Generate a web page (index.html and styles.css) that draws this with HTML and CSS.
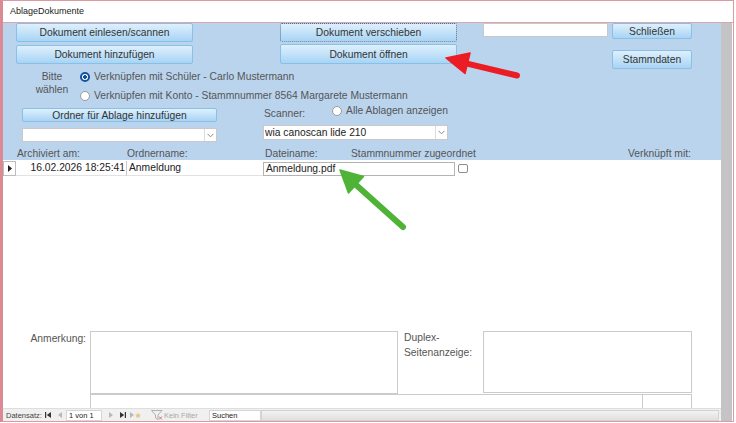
FILE: index.html
```html
<!DOCTYPE html>
<html lang="de">
<head>
<meta charset="utf-8">
<title>AblageDokumente</title>
<link rel="stylesheet" href="styles.css">
</head>
<body>
<div class="win">
  <div class="title">AblageDokumente</div>
  <div class="main">
    <div class="form">
      <div class="hdr">
        <div class="row-a">
          <div class="col c1">
            <div class="btn h19">Dokument einlesen/scannen</div>
            <div class="btn h19">Dokument hinzufügen</div>
          </div>
          <div class="col c2">
            <div class="btn h19 focus">Dokument verschieben</div>
            <div class="btn h20">Dokument öffnen</div>
          </div>
          <div class="tb search"></div>
          <div class="col c4">
            <div class="btn h16">Schließen</div>
            <div class="btn h19">Stammdaten</div>
          </div>
        </div>
        <div class="row-b">
          <div class="choose">Bitte<br>wählen</div>
          <div class="opts">
            <div class="opt"><span class="radio on"></span>Verknüpfen mit Schüler - Carlo Mustermann</div>
            <div class="opt"><span class="radio"></span>Verknüpfen mit Konto - Stammnummer 8564 Margarete Mustermann</div>
          </div>
        </div>
        <div class="row-c">
          <div class="folder">
            <div class="btn h14">Ordner für Ablage hinzufügen</div>
            <div class="combo c-folder"><span class="val"></span><span class="dd"><svg width="7" height="5" viewBox="0 0 7 5"><path d="M0.5 0.8 L3.5 3.8 L6.5 0.8" fill="none" stroke="#8a8a8a" stroke-width="1"/></svg></span></div>
          </div>
          <div class="scan">
            <div class="scan-top">
              <span class="lbl-scan">Scanner:</span>
              <span class="opt opt-all"><span class="radio"></span>Alle Ablagen anzeigen</span>
            </div>
            <div class="combo c-scan"><span class="val">wia canoscan lide 210</span><span class="dd"><svg width="7" height="5" viewBox="0 0 7 5"><path d="M0.5 0.8 L3.5 3.8 L6.5 0.8" fill="none" stroke="#8a8a8a" stroke-width="1"/></svg></span></div>
          </div>
        </div>
        <div class="row-d">
          <span class="h-arch">Archiviert am:</span>
          <span class="h-ord">Ordnername:</span>
          <span class="h-dat">Dateiname:</span>
          <span class="h-stn">Stammnummer zugeordnet</span>
          <span class="h-ver">Verknüpft mit:</span>
        </div>
      </div>
      <div class="detail">
        <div class="rec">
          <div class="sel"><svg width="4" height="7" viewBox="0 0 4 7"><path d="M0 0 L4 3.5 L0 7 Z" fill="#222"/></svg></div>
          <div class="cell date">16.02.2026 18:25:41</div>
          <div class="cell ordner">Anmeldung</div>
          <div class="cell datei">Anmeldung.pdf</div>
          <div class="chk"></div>
        </div>
        <div class="notes">
          <div class="lbl-anm">Anmerkung:</div>
          <div class="box anm"></div>
          <div class="lbl-dup">Duplex-<br>Seitenanzeige:</div>
          <div class="box dup"></div>
        </div>
        <div class="sub"><div class="sub-r"></div></div>
      </div>
      <div class="nav">
        <span class="nav-lbl">Datensatz:</span>
        <svg class="ic ic-first" width="6" height="6" viewBox="0 0 6 6"><rect x="0" y="0" width="1.2" height="6" fill="#333"/><path d="M6 0 L1.8 3 L6 6 Z" fill="#333"/></svg>
        <svg class="ic ic-prev" width="4" height="6" viewBox="0 0 4 6"><path d="M4 0 L0 3 L4 6 Z" fill="#b8b8b8"/></svg>
        <span class="navbox pos">1 von 1</span>
        <svg class="ic ic-next" width="4" height="6" viewBox="0 0 4 6"><path d="M0 0 L4 3 L0 6 Z" fill="#b8b8b8"/></svg>
        <svg class="ic ic-last" width="6" height="6" viewBox="0 0 6 6"><path d="M0 0 L4.2 3 L0 6 Z" fill="#333"/><rect x="4.8" y="0" width="1.2" height="6" fill="#333"/></svg>
        <svg class="ic ic-new" width="14" height="6" viewBox="0 0 14 6"><path d="M0 0 L4 3 L0 6 Z" fill="#b8b8b8"/><path d="M8 0.5 L9 2.5 L11 2.7 L9.5 4 L10 6 L8 5 L6 6 L6.5 4 L5 2.7 L7 2.5 Z" fill="#e8c48a"/></svg>
        <svg class="ic ic-filter" width="12" height="10" viewBox="0 0 12 10"><path d="M0.5 0.5 H11 L7 5 V9.5 L4.5 8 V5 Z" fill="none" stroke="#b0b0b0" stroke-width="1"/><path d="M8 6.5 L11 9.5 M11 6.5 L8 9.5" stroke="#c07070" stroke-width="0.9"/></svg>
        <span class="nav-filter">Kein Filter</span>
        <span class="navbox find">Suchen</span>
        <span class="hscroll"></span>
      </div>
    </div>
    <div class="vscroll"></div>
  </div>
  <svg class="arrows" width="736" height="423" viewBox="0 0 736 423">
    <line x1="464" y1="62.8" x2="517" y2="75.5" stroke="#ec1c24" stroke-width="6" stroke-linecap="round"/>
    <path d="M446 58 L465 73.5 L470 53 Z" fill="#ec1c24" stroke="#ec1c24" stroke-width="1.5" stroke-linejoin="round"/>
    <line x1="355" y1="184" x2="403" y2="227" stroke="#4fb338" stroke-width="6" stroke-linecap="round"/>
    <path d="M340 170 L348.5 193 L363.5 176.5 Z" fill="#4fb338" stroke="#4fb338" stroke-width="1.5" stroke-linejoin="round"/>
  </svg>
</div>
</body>
</html>
```

FILE: styles.css
```css
* { box-sizing: border-box; }

body {
  margin: 0;
  background: #fff;
  font-family: "Liberation Sans", Arial, sans-serif;
}

.win {
  position: relative;
  width: 734px;
  height: 422px;
  background: #fff;
  border-top: 1px solid #dc9aa2;
  border-left: 3px solid #d98a94;
  border-right: 1px solid #dc9aa2;
  border-bottom: 1px solid #dc9aa2;
}

.title {
  height: 22px;
  border-bottom: 1px solid #e0a4ab;
  padding-left: 7px;
  line-height: 21px;
  font-size: 9px;
  color: #222;
}

.main {
  display: flex;
  height: 398px;
}

.form {
  width: 718px;
  display: flex;
  flex-direction: column;
}

.vscroll {
  width: 11px;
  margin-left: 0;
  background: #c4c4c7;
}

/* ---------- header ---------- */
.hdr {
  height: 137px;
  background: #bad4ee;
  font-size: 10.3px;
  color: #555;
}

.row-a {
  display: flex;
  align-items: flex-start;
  height: 47px;
}

.col {
  display: flex;
  flex-direction: column;
}

.c1 { margin-left: 13px; width: 177px; gap: 3px; }
.c2 { margin-left: 87px; width: 177px; gap: 2px; }
.c4 { margin-left: 4px; width: 80px; gap: 11px; }

.btn {
  display: flex;
  align-items: center;
  justify-content: center;
  border: 1px solid #88c0e8;
  border-radius: 2px;
  background: linear-gradient(#def0fd, #a8d4f4);
  color: #333;
  font-size: 10.3px;
  white-space: nowrap;
}

.btn.focus { border: 1px dotted #4b6f93; }

.h14 { height: 14px; }
.h16 { height: 16px; }
.h19 { height: 19px; }
.h20 { height: 20px; }

.tb {
  background: #fff;
  border: 1px solid #c9c9c9;
}

.search {
  margin-left: 26px;
  width: 125px;
  height: 14px;
}

.row-b {
  display: flex;
  height: 32px;
}

.choose {
  margin-left: 29px;
  width: 40px;
  text-align: center;
  line-height: 13px;
}

.opts {
  margin-left: 8px;
  display: flex;
  flex-direction: column;
  gap: 6px;
}

.opt {
  display: flex;
  align-items: center;
  height: 13px;
  white-space: nowrap;
}

.radio {
  width: 10px;
  height: 10px;
  border-radius: 50%;
  border: 1px solid #9a9a9a;
  background: #fff;
  margin-right: 4px;
  flex: none;
}

.radio.on {
  border: 2px solid #13529f;
  background: radial-gradient(circle, #13529f 0 1.6px, #fff 2.1px);
}

.row-c {
  display: flex;
  height: 41px;
}

.folder {
  margin-left: 19px;
  width: 195px;
  padding-top: 6px;
  display: flex;
  flex-direction: column;
  gap: 6px;
}

.combo {
  display: flex;
  background: #fff;
  border: 1px solid #c9c9c9;
  color: #222;
}

.combo .val {
  flex: 1;
  padding-left: 1px;
  line-height: 13px;
}

.combo .dd {
  width: 12px;
  border-left: 1px solid #dcdcdc;
  display: flex;
  align-items: center;
  justify-content: center;
}

.c-folder { height: 14px; }

.scan {
  margin-left: 46px;
  width: 185px;
}

.scan-top {
  display: flex;
  align-items: flex-start;
  height: 23px;
}

.lbl-scan {
  width: 86px;
  padding-left: 1px;
  margin-top: 5px;
  line-height: 13px;
}

.opt-all {
  margin-top: 2px;
}

.c-scan { height: 15px; }

.row-d {
  display: flex;
  height: 17px;
  padding-top: 4px;
  line-height: 13px;
  white-space: nowrap;
}

.h-arch { margin-left: 14px; width: 110px; }
.h-ord { width: 138px; }
.h-dat { width: 86px; }
.h-stn { width: 277px; }
.h-ver { width: 66px; }

/* ---------- detail ---------- */
.detail {
  height: 248px;
  font-size: 10.3px;
  color: #222;
}

.rec {
  display: flex;
  align-items: flex-start;
  margin-top: 1px;
  height: 15px;
}

.sel {
  width: 13px;
  height: 15px;
  border: 1px solid #bdbdbd;
  display: flex;
  align-items: center;
  justify-content: center;
  background: #fff;
}

.cell {
  height: 15px;
  line-height: 14px;
  white-space: nowrap;
}

.date {
  width: 110px;
  text-align: right;
  padding-right: 1px;
  border-bottom: 1px solid #e2e2e2;
}

.ordner {
  width: 137px;
  padding-left: 2px;
  border-left: 1px solid #c8c8c8;
  border-bottom: 1px solid #e2e2e2;
}

.datei {
  width: 192px;
  margin-top: 1px;
  height: 14px;
  line-height: 12px;
  padding-left: 2px;
  border: 1px solid #b4b4b4;
}

.chk {
  margin-left: 3px;
  margin-top: 3px;
  width: 10px;
  height: 9px;
  border: 1px solid #8c8c8c;
  border-radius: 2px;
  background: #fff;
}

.notes {
  display: flex;
  margin-top: 155px;
  height: 63px;
  color: #555;
}

.lbl-anm {
  width: 83px;
  text-align: right;
  padding-top: 1px;
  line-height: 13px;
}

.box {
  border: 1px solid #cbcbcb;
  background: #fff;
}

.anm {
  margin-left: 4px;
  width: 308px;
  height: 63px;
}

.lbl-dup {
  margin-left: 6px;
  width: 79px;
  margin-top: -1px;
  line-height: 15px;
}

.dup {
  width: 209px;
  height: 62px;
}

.sub {
  margin-left: 87px;
  width: 602px;
  height: 14px;
  border: 1px solid #cbcbcb;
  border-bottom: none;
  display: flex;
}

.sub-r {
  margin-left: 551px;
  width: 49px;
  border-left: 1px solid #cbcbcb;
}

/* ---------- navigation bar ---------- */
.nav {
  display: flex;
  align-items: center;
  height: 13px;
  background: #f0f0f0;
  border-top: 1px solid #dedede;
  font-size: 7.5px;
  color: #444;
  white-space: nowrap;
}

.nav-lbl { margin-left: 3px; width: 39px; }

.ic { flex: none; }
.ic-first { margin-left: 0; }
.ic-prev { margin-left: 7px; }

.navbox {
  height: 11px;
  line-height: 10px;
  background: #fff;
  border: 1px solid #d6d6d6;
  padding-left: 2px;
  color: #222;
}

.pos { margin-left: 4px; width: 36px; }

.ic-next { margin-left: 7px; }
.ic-last { margin-left: 7px; }
.ic-new { margin-left: 4px; }
.ic-filter { margin-left: 7px; }

.nav-filter {
  margin-left: 1px;
  width: 45px;
  color: #a8a8a8;
}

.find { width: 52px; }

.hscroll {
  flex: 1;
  height: 11px;
  margin-right: 2px;
  background: linear-gradient(#f3f3f3, #e0e0e0);
  border: 1px solid #d2d2d2;
}

/* ---------- annotation arrows ---------- */
.arrows {
  position: absolute;
  left: -3px;
  top: -1px;
  pointer-events: none;
}
```
